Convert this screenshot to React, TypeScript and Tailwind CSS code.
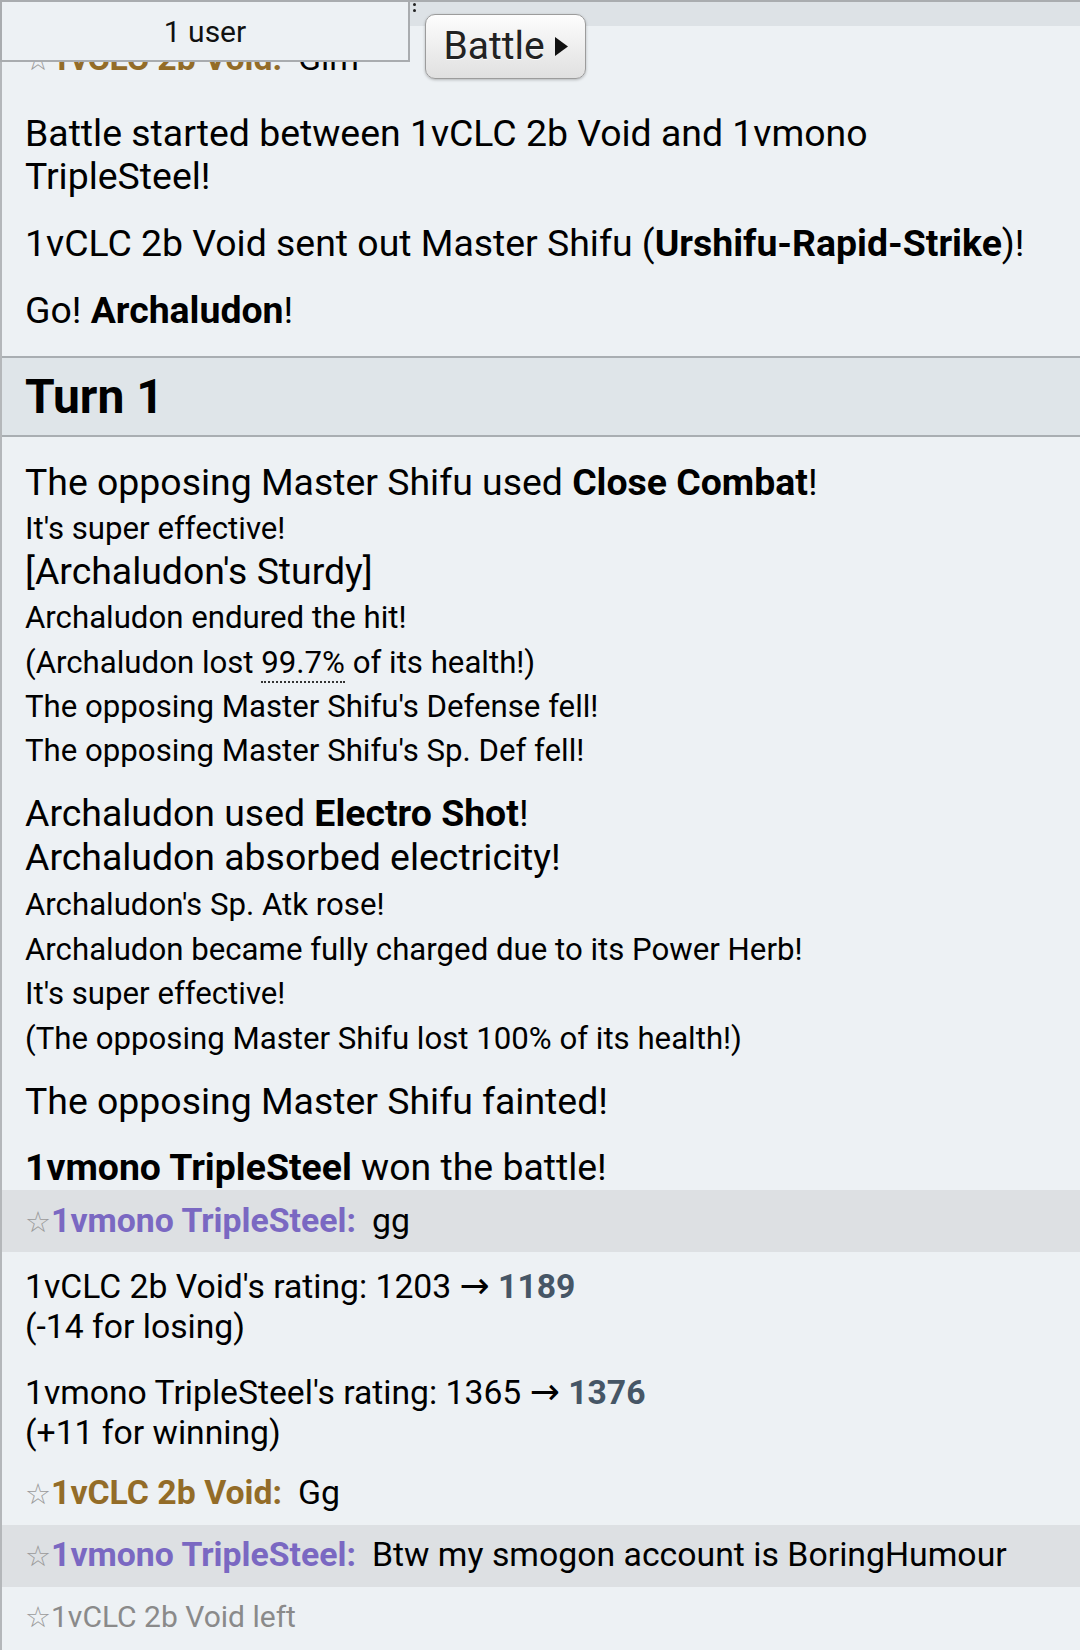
import React from "react";

type ChatProp = {
  name: string;
  color: string;
  message: string;
  highlight?: boolean;
  className?: string;
};

const Star = () => (
  <span className="text-[29px] text-[#9a9a9a] font-normal">☆</span>
);

const ChatRow = ({ name, color, message, highlight, className }: ChatProp) => {
  return (
    <div
      className={`px-[23px] py-[8.5px] leading-[44px] text-[33.8px] whitespace-nowrap ${
        highlight ? "bg-[#dde0e3]" : ""
      } ${className ?? ""}`}
    >
      <Star />
      <strong className={`font-bold ${color}`}>{name}:</strong>
      <span className="ml-[16px]">{message}</span>
    </div>
  );
};

// small line, sits on the baseline of the bigger log font
const Sm = ({ children }: { children: React.ReactNode }) => (
  <div>
    <span className="text-[31.2px] leading-[30px]">{children}</span>
  </div>
);

const Rating = ({
  text,
  from,
  to,
  diff,
  className,
}: {
  text: string;
  from: number;
  to: number;
  diff: string;
  className?: string;
}) => (
  <div className={`px-[23px] text-[33.7px] leading-[40px] ${className ?? ""}`}>
    <div>
      {text} {from}{" "}
      <span className="font-['DejaVu_Sans',_sans-serif] text-[36px] leading-[30px]">
        →
      </span>{" "}
      <strong className="font-bold text-[#465666]">{to}</strong>
    </div>
    <div>{diff}</div>
  </div>
);

export default function App() {
  return (
    <div className="relative min-h-[1650px] bg-[#edf1f4] font-['Roboto',_'Noto_Sans',_sans-serif] text-black overflow-hidden">
      {/* log */}
      <div className="min-h-[1650px] border-l-2 border-[#b4b7ba] pt-[28px]">
        <ChatRow name="1vCLC 2b Void" color="text-[#936c28]" message="Gim" />

        <div className="mt-[22px] px-[23px] text-[37.4px] leading-[43px]">
          Battle started between 1vCLC 2b Void and 1vmono TripleSteel!
        </div>
        <div className="mt-[23px] px-[23px] text-[37.4px] leading-[44px] whitespace-nowrap">
          1vCLC 2b Void sent out Master Shifu (
          <strong className="font-bold">Urshifu-Rapid-Strike</strong>)!
        </div>
        <div className="mt-[23px] px-[23px] text-[37.4px] leading-[44px]">
          Go! <strong className="font-bold">Archaludon</strong>!
        </div>

        <h2 className="mt-[24px] h-[81px] flex items-center border-y-2 border-[#a9aeb2] bg-[#dfe5e9] px-[23px] text-[48px] font-bold">
          Turn 1
        </h2>

        <div className="mt-[23px] px-[23px] text-[37.4px] leading-[44.4px]">
          <div>
            The opposing Master Shifu used{" "}
            <strong className="font-bold">Close Combat</strong>!
          </div>
          <Sm>It's super effective!</Sm>
          <div>[Archaludon's Sturdy]</div>
          <Sm>Archaludon endured the hit!</Sm>
          <Sm>
            (Archaludon lost{" "}
            <abbr className="no-underline border-b-2 border-dotted border-[#333]">
              99.7%
            </abbr>{" "}
            of its health!)
          </Sm>
          <Sm>The opposing Master Shifu's Defense fell!</Sm>
          <Sm>The opposing Master Shifu's Sp. Def fell!</Sm>
        </div>

        <div className="mt-[20px] px-[23px] text-[37.4px] leading-[44.6px]">
          <div>
            Archaludon used <strong className="font-bold">Electro Shot</strong>!
          </div>
          <div>Archaludon absorbed electricity!</div>
          <Sm>Archaludon's Sp. Atk rose!</Sm>
          <Sm>Archaludon became fully charged due to its Power Herb!</Sm>
          <Sm>It's super effective!</Sm>
          <Sm>(The opposing Master Shifu lost 100% of its health!)</Sm>
        </div>

        <div className="mt-[21px] px-[23px] text-[37.4px] leading-[44px]">
          The opposing Master Shifu fainted!
        </div>
        <div className="mt-[21.6px] px-[23px] text-[37.4px] leading-[44px]">
          <strong className="font-bold">1vmono TripleSteel</strong> won the
          battle!
        </div>

        <ChatRow
          name="1vmono TripleSteel"
          color="text-[#7a68c2]"
          message="gg"
          highlight
          className="mt-[1px]"
        />

        <Rating
          className="mt-[15px]"
          text="1vCLC 2b Void's rating:"
          from={1203}
          to={1189}
          diff="(-14 for losing)"
        />
        <Rating
          className="mt-[25.6px]"
          text="1vmono TripleSteel's rating:"
          from={1365}
          to={1376}
          diff="(+11 for winning)"
        />

        <ChatRow
          name="1vCLC 2b Void"
          color="text-[#936c28]"
          message="Gg"
          className="mt-[10px]"
        />
        <ChatRow
          name="1vmono TripleSteel"
          color="text-[#7a68c2]"
          message="Btw my smogon account is BoringHumour"
          highlight
        />
        <div className="px-[23px] py-[8.5px] leading-[44px] text-[30px] text-[#8a8a8a]">
          <Star />
          1vCLC 2b Void left
        </div>
      </div>

      {/* header overlay */}
      <div className="absolute left-0 top-0 w-full h-[26px] bg-[#dde2e6] border-t-2 border-[#a9acaf]" />
      <div className="absolute left-0 top-0 w-[410px] h-[62px] bg-[#edf1f4] border-2 border-[#a9acaf] flex items-center justify-center text-[30px] text-[#111]">
        1 user
      </div>
      <div className="absolute left-[413px] top-[3px] flex flex-col gap-[3px]">
        <div className="w-[3px] h-[3px] rounded-full bg-[#222]" />
        <div className="w-[3px] h-[3px] rounded-full bg-[#222]" />
      </div>
      <button className="absolute left-[425px] top-[14px] w-[161px] h-[65px] rounded-[10px] border border-[#9c9c9c] bg-gradient-to-b from-[#fdfdfd] to-[#e0e0e0] shadow-[0_1px_3px_rgba(0,0,0,0.25)] flex items-center justify-center gap-[10px] text-[39px] text-[#222] [text-shadow:0_1px_0_#fff]">
        <span>Battle</span>
        <svg width="13" height="19" viewBox="0 0 13 19">
          <path d="M0 0 L13 9.5 L0 19 Z" fill="#111" />
        </svg>
      </button>
    </div>
  );
}
